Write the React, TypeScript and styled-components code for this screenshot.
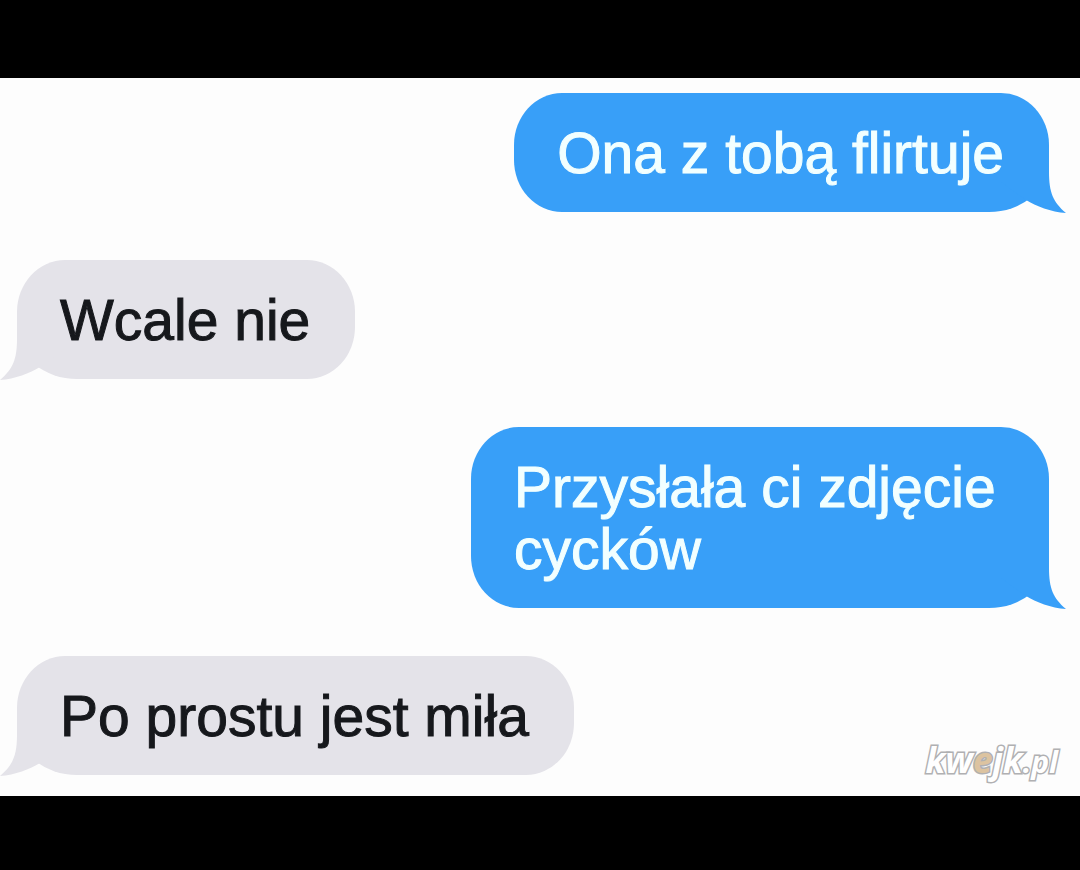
import React from "react";
import styled, { createGlobalStyle } from "styled-components";

type Side = "sent" | "received";

const colors = {
  sent: "#389ff8",
  received: "#e4e3e9",
};

const GlobalStyle = createGlobalStyle`
  *, *::before, *::after { box-sizing: border-box; }
  body {
    margin: 0;
    background: #000;
    font-family: "Liberation Sans", Arial, sans-serif;
  }
`;

const Page = styled.div`
  min-height: 100vh;
  padding: 78px 0 74px;
  background: #000;
`;

const Chat = styled.main`
  position: relative;
  padding: 15px 31px 21px 17px;
  background: #fdfdfd;
`;

const Messages = styled.ul`
  display: flex;
  flex-direction: column;
  gap: 48px;
  margin: 0;
  padding: 0;
  list-style: none;
`;

const Bubble = styled.li<{ $side: Side }>`
  position: relative;
  align-self: ${({ $side }) => ($side === "sent" ? "flex-end" : "flex-start")};
  max-width: 56%;
  padding: 29px 45px 28px 43px;
  border-radius: ${({ $side }) =>
    $side === "sent"
      ? "48px 48px 60px 48px / 52px 52px 50px 52px"
      : "48px 48px 48px 60px / 52px 52px 52px 50px"};
  background: ${({ $side }) => colors[$side]};
  color: ${({ $side }) => ($side === "sent" ? "#f2ffff" : "#16181c")};
  font-size: 57px;
  line-height: 62px;
  -webkit-text-stroke: 1px currentColor;
`;

const TailShape = styled.svg<{ $side: Side }>`
  position: absolute;
  bottom: -2px;
  ${({ $side }) =>
    $side === "sent" ? "right: -19px;" : "left: -19px; transform: scaleX(-1);"}
  width: 79px;
  height: 62px;
  fill: ${({ $side }) => colors[$side]};
`;

const Text = styled.span`
  position: relative;
`;

const Watermark = styled.a`
  position: absolute;
  right: 22px;
  bottom: 14px;
  color: #fff;
  font: italic 700 35px/40px "Open Sans", sans-serif;
  text-decoration: none;
  -webkit-text-stroke: 3px #b0b0b2;
  paint-order: stroke fill;
`;

const Accent = styled.span`
  color: #dcc3a0;
`;

const Suffix = styled.span`
  font-size: 30px;
`;

function Message({ side, children }: { side: Side; children: React.ReactNode }) {
  return (
    <Bubble $side={side}>
      <TailShape $side={side} viewBox="0 0 79 62" aria-hidden="true">
        <path d="M60 0V20C60 40 64 50 77 61C62 60 47 54 37 48L12 30V0Z" />
      </TailShape>
      <Text>{children}</Text>
    </Bubble>
  );
}

export default function App() {
  return (
    <Page>
      <GlobalStyle />
      <Chat>
        <Messages>
          <Message side="sent">Ona z tobą flirtuje</Message>
          <Message side="received">Wcale nie</Message>
          <Message side="sent">Przysłała ci zdjęcie cycków</Message>
          <Message side="received">Po prostu jest miła</Message>
        </Messages>
        <Watermark href="#">
          kw<Accent>e</Accent>jk<Suffix>.pl</Suffix>
        </Watermark>
      </Chat>
    </Page>
  );
}
